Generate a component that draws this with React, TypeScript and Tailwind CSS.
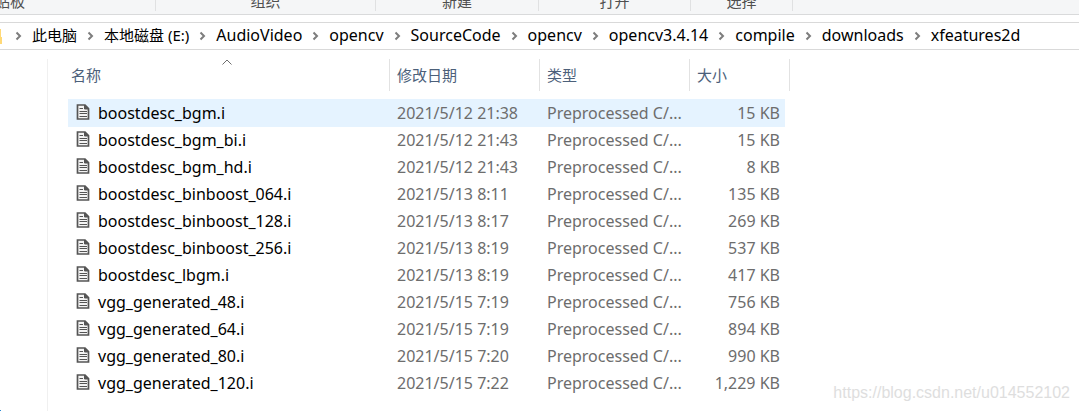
const crumbs = [
  'AudioVideo',
  'opencv',
  'SourceCode',
  'opencv',
  'opencv3.4.14',
  'compile',
  'downloads',
  'xfeatures2d',
];

const roots = ['此电脑', '本地磁盘 (E:)'];

const groups = [
  { label: '剪贴板', width: 'w-[306px] -ml-[150px]' },
  { label: '组织', width: 'w-[220px]' },
  { label: '新建', width: 'w-[163px]' },
  { label: '打开', width: 'w-[152px]' },
  { label: '选择', width: 'w-[102px]' },
];

const files = [
  { name: 'boostdesc_bgm.i', date: '2021/5/12 21:38', size: '15 KB' },
  { name: 'boostdesc_bgm_bi.i', date: '2021/5/12 21:43', size: '15 KB' },
  { name: 'boostdesc_bgm_hd.i', date: '2021/5/12 21:43', size: '8 KB' },
  { name: 'boostdesc_binboost_064.i', date: '2021/5/13 8:11', size: '135 KB' },
  { name: 'boostdesc_binboost_128.i', date: '2021/5/13 8:17', size: '269 KB' },
  { name: 'boostdesc_binboost_256.i', date: '2021/5/13 8:19', size: '537 KB' },
  { name: 'boostdesc_lbgm.i', date: '2021/5/13 8:19', size: '417 KB' },
  { name: 'vgg_generated_48.i', date: '2021/5/15 7:19', size: '756 KB' },
  { name: 'vgg_generated_64.i', date: '2021/5/15 7:19', size: '894 KB' },
  { name: 'vgg_generated_80.i', date: '2021/5/15 7:20', size: '990 KB' },
  { name: 'vgg_generated_120.i', date: '2021/5/15 7:22', size: '1,229 KB' },
];

function Crumb({ label, size }: { label: string; size: string }) {
  return (
    <div className="flex shrink-0 items-center">
      <svg className="mx-[10px] h-[10px] w-[7px] shrink-0" viewBox="0 0 7 10" fill="none" stroke="#7d7d7d" strokeWidth="2" aria-hidden="true">
        <path d="M1.5 1.5 5 5 1.5 8.5" />
      </svg>
      <a href="#" className={`whitespace-nowrap pb-[2px] ${size}`}>{label}</a>
    </div>
  );
}

function FileIcon() {
  return (
    <svg className="mb-[2px] h-4 w-[14px] shrink-0" viewBox="0 0 14 16" fill="none" aria-hidden="true">
      <path d="M1.5 1H9L12.5 4.5V15H1.5Z" fill="#f4f4f4" stroke="#555" strokeWidth="1.7" />
      <path d="M8.5 1V5H12.5Z" fill="#555" stroke="#555" strokeWidth="1" />
      <path d="M3.5 4.5H7M3.5 7.5H11M3.5 9.5H11M3.5 12.5H11" stroke="#555" strokeWidth="1.2" />
    </svg>
  );
}

function Column({ label, sorted }: { label: string; sorted?: boolean }) {
  return (
    <th scope="col" className="p-0 text-left text-[15px] font-normal">
      <button type="button" className="relative flex h-8 w-full items-center border-r border-[#e2e2e2] pl-[7px] text-[#4c607a]">
        {label}
        {sorted && (
          <svg className="absolute top-0 left-1/2 h-[6px] w-[10px] -translate-x-1/2" viewBox="0 0 10 6" fill="none" stroke="#6d6d6d" aria-hidden="true">
            <path d="M.5 5.5 5 1 9.5 5.5" />
          </svg>
        )}
      </button>
    </th>
  );
}

export default function App() {
  return (
    <div className="relative flex min-h-screen flex-col overflow-hidden bg-white font-['Noto_Sans','Noto_Sans_CJK_SC',sans-serif] text-base leading-5 text-black">
      <header className="flex h-[15px] overflow-hidden border-b border-[#d9dadb] bg-[#f5f6f7] text-[15px] leading-5 text-[#4f4f4f]">
        {groups.map((g) => (
          <div key={g.label} className={`flex h-[11px] shrink-0 items-end justify-center border-r border-[#e0e1e2] ${g.width}`}>
            <span className="whitespace-nowrap">{g.label}</span>
          </div>
        ))}
      </header>

      <nav aria-label="路径" className="mt-[7px] flex h-7 items-center overflow-hidden border-y border-[#d9d9d9]">
        <svg className="mr-[3px] h-[15px] w-[2px] shrink-0" viewBox="0 0 2 15" aria-hidden="true">
          <path d="M0 0H1V8H2V15H0Z" fill="#ffd977" />
        </svg>
        {roots.map((c) => (
          <Crumb key={c} label={c} size="text-[15px]" />
        ))}
        {crumbs.map((c, i) => (
          <Crumb key={i} label={c} size="text-base" />
        ))}
      </nav>

      <main className="flex flex-1 pt-[9px]">
        <aside className="w-12 shrink-0 border-r border-[#f0f0f0]" />
        <div className="pl-4">
          <table className="w-[726px] table-fixed border-collapse">
            <colgroup>
              <col className="w-[326px]" />
              <col className="w-[150px]" />
              <col className="w-[150px]" />
              <col className="w-[100px]" />
            </colgroup>
            <thead>
              <tr>
                <Column label="名称" sorted />
                <Column label="修改日期" />
                <Column label="类型" />
                <Column label="大小" />
              </tr>
            </thead>
            <tbody className="before:block before:h-2 before:content-['']">
              {files.map((f, i) => {
                const fill = i === 0 ? 'bg-[#e5f3ff] shadow-[0_1px_0_#e5f3ff]' : '';
                return (
                  <tr key={f.name} className="h-[27px] text-[#6d6d6d]">
                    <td className="p-0 pl-1">
                      <div className={`flex h-[27px] items-center gap-2 pl-2 text-black ${fill}`}>
                        <FileIcon />
                        {f.name}
                      </div>
                    </td>
                    <td className={`p-0 pl-[7px] ${fill}`}>{f.date}</td>
                    <td className={`p-0 pl-[7px] whitespace-nowrap ${fill}`}>Preprocessed C/...</td>
                    <td className="p-0 pr-[5px]">
                      <div className={`flex h-[27px] items-center justify-end pr-[5px] ${fill}`}>{f.size}</div>
                    </td>
                  </tr>
                );
              })}
            </tbody>
          </table>
        </div>
      </main>

      <span className="absolute right-[9px] bottom-[6px] font-['Liberation_Sans',sans-serif] text-base text-[#dedede]">
        https://blog.csdn.net/u014552102
      </span>
      <span className="absolute bottom-0 left-0 h-px w-px bg-[#2a8ad4]" />
    </div>
  );
}
